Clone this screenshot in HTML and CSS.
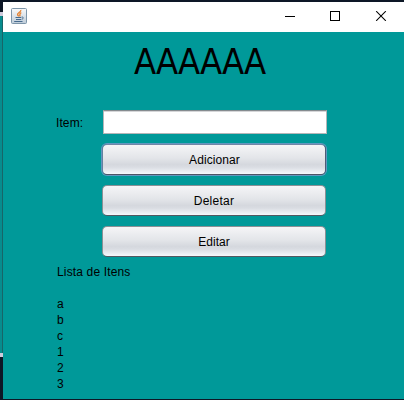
FILE: index.html
```html
<!DOCTYPE html>
<html lang="pt">
<head>
<meta charset="utf-8">
<title>Itens</title>
<link rel="stylesheet" href="styles.css">
</head>
<body>
<div class="backdrop"></div>
<main class="window">
  <header class="titlebar">
    <svg class="app-icon" width="16" height="16" viewBox="0 0 16 16">
      <defs><linearGradient id="g" x2="0" y2="1"><stop stop-color="#f9fafb"/><stop offset="1" stop-color="#bdcbd8"/></linearGradient></defs>
      <rect x=".5" y=".5" width="15" height="15" rx="1" fill="url(#g)" stroke="#7d95a9"/>
      <path d="M9.8 2C10.5 4 6 5 6.6 6.7C6.9 7.5 7.7 8 7.7 8.6M10.3 4.6C7.5 5.7 9.7 6.8 8.6 8.4" fill="none" stroke="#e6812f" stroke-width="1.4"/>
      <path d="M4.5 9.5H10M5 11.5H10M3.2 13.5H11.5M10.5 9.2C13 8.5 12.7 11 10.6 11.3" fill="none" stroke="#466a8d" stroke-width="1"/>
    </svg>
    <svg class="controls" width="102" height="10" viewBox="0 0 102 10" fill="none" stroke="#000">
      <path d="M0 5.5H10M45.5 .5H54.5V9.5H45.5Z" shape-rendering="crispEdges"/>
      <path d="M91.2 .2L100.8 9.8M100.8 .2L91.2 9.8" stroke-width="1.1"/>
    </svg>
  </header>
  <h1 class="title">AAAAAA</h1>
  <form class="form">
    <label class="label" for="item">Item:</label>
    <input class="field" id="item" type="text">
    <button class="button focused" type="button">Adicionar</button>
    <button class="button wide" type="button">Deletar</button>
    <button class="button" type="button">Editar</button>
  </form>
  <section class="list">
    <p class="heading">Lista de Itens</p>
    <ul><li>a</li><li>b</li><li>c</li><li>1</li><li>2</li><li>3</li></ul>
  </section>
</main>
</body>
</html>
```
FILE: styles.css
```css
* { box-sizing: border-box; margin: 0; padding: 0; }
body {
  display: flex;
  height: 400px;
  overflow: hidden;
  background: #0d1726;
  font: 12px/16px "Liberation Sans", Arial, sans-serif;
  color: #000;
}
.backdrop {
  width: 3px;
  height: 345px;
  margin-top: 12px;
  background: linear-gradient(90deg, #078c8e 2px, #176568 2px) padding-box;
  border-top: 4px solid #cfcbdc;
  border-bottom: 4px solid #cfcbdc;
}
.window {
  width: 401px;
  height: 397px;
  margin-top: 2px;
  background: #009999;
}
.titlebar {
  display: flex;
  justify-content: space-between;
  height: 30px;
  padding: 6px 17px 0 8px;
  background: #fff;
}
.controls { margin-top: 3px; }
.title {
  height: 78px;
  padding: 8px 0 0 131px;
  font: 36px/44px "DejaVu Sans Condensed", "DejaVu Sans", sans-serif;
  font-stretch: condensed;
  letter-spacing: -1.15px;
}
.form {
  display: grid;
  grid-template-columns: 46px 224px;
  grid-template-rows: 24px 31px 31px 31px;
  row-gap: 10px;
  padding-left: 53px;
}
.label { padding-top: 5px; letter-spacing: .1px; }
.field {
  width: 224px;
  margin-left: 1px;
  border: 1px solid #b4b6b8;
  border-top-color: #858b8f;
  background: #fff;
  box-shadow: inset 0 1px #d5d6d8;
}
.button {
  grid-column: 2;
  width: 224px;
  border: 1px solid #8b9095;
  border-bottom-color: #535861;
  border-radius: 5px;
  background: linear-gradient(#f5f5f7 0%, #e3e5e9 45%, #d5d8de 67%, #d9dce2 76%, #f5f8fc 100%);
  font: inherit;
  color: #000;
}
.wide { letter-spacing: .25px; }
.focused {
  padding-left: 1px;
  border-color: #7286a6 #4e5c75 #4e5465 #65809f;
  box-shadow: 0 0 0 1px #6397c0;
  letter-spacing: .1px;
}
.list { padding: 7px 0 0 54px; }
.heading { letter-spacing: .15px; }
.list ul { margin-top: 16px; list-style: none; }
```
